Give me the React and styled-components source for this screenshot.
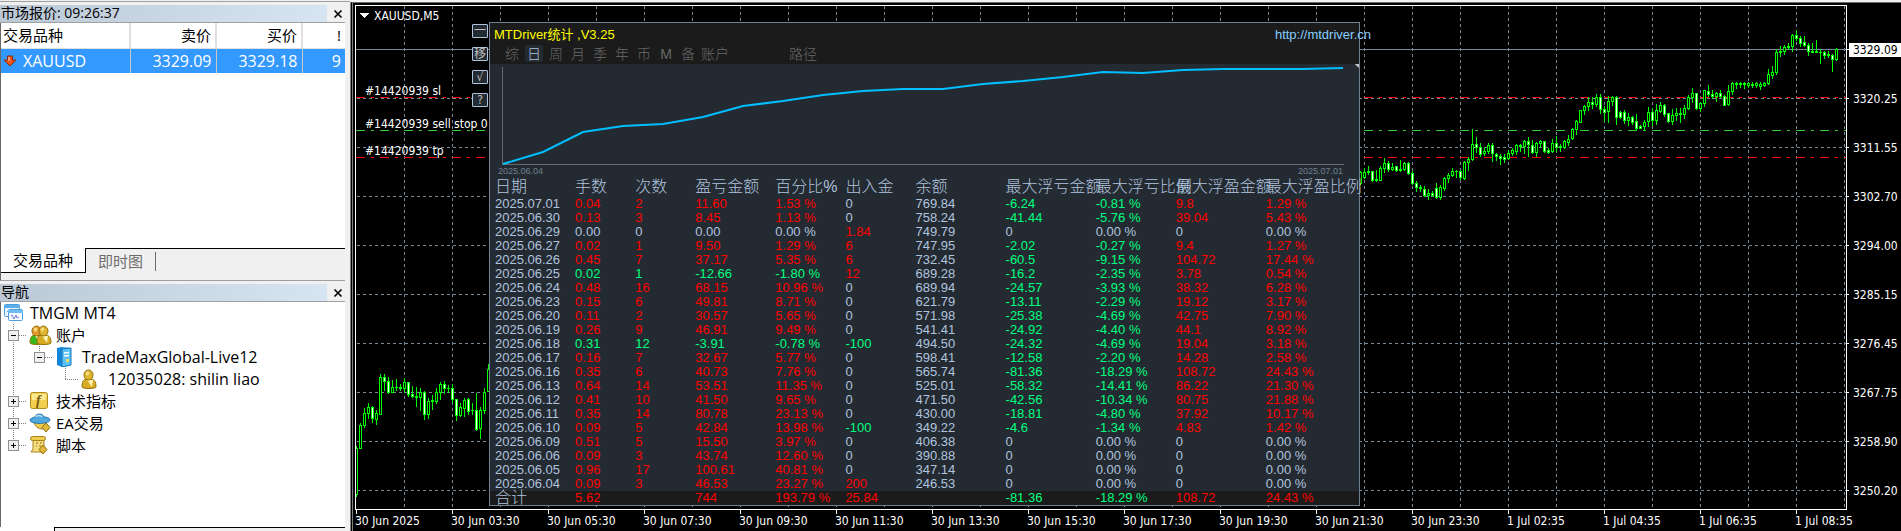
import React, { useState } from 'react'
import styled, { createGlobalStyle, css } from 'styled-components'

const GlobalStyle = createGlobalStyle`
  * {
    box-sizing: border-box;
  }
  body {
    margin: 0;
    background: #f0f0f0;
    overflow: hidden;
    font-family: 'Open Sans', 'Noto Sans CJK SC', sans-serif;
    font-size: 15px;
    color: #000;
  }
  button {
    padding: 0;
    border: 0;
    background: none;
    font: inherit;
    color: inherit;
  }
`

/* ---------- data ---------- */

const quotes = [{ symbol: 'XAUUSD', bid: '3329.09', ask: '3329.18', spread: '9' }]

const prices = ['3329.09', '3320.25', '3311.55', '3302.70', '3294.00', '3285.15', '3276.45', '3267.75', '3258.90', '3250.20']

const times = [
  '30 Jun 2025', '30 Jun 03:30', '30 Jun 05:30', '30 Jun 07:30', '30 Jun 09:30', '30 Jun 11:30',
  '30 Jun 13:30', '30 Jun 15:30', '30 Jun 17:30', '30 Jun 19:30', '30 Jun 21:30', '30 Jun 23:30',
  '1 Jul 02:35', '1 Jul 04:35', '1 Jul 06:35', '1 Jul 08:35'
]

const orders = [
  { label: '#14420939 sl', y: 91, color: '#ff0000' },
  { label: '#14420939 sell stop 0', y: 124, color: '#32cd32' },
  { label: '#14420939 tp', y: 151, color: '#ff0000' }
]

// [high, body top, body bottom, low, rising], measured downwards in thirds of a pixel
const nightCandles = [
  [1338, 1346, 1484, 1490, 1], [1270, 1276, 1345, 1345, 1], [1225, 1240, 1277, 1283, 1], [1210, 1222, 1240, 1256, 1],
  [1219, 1222, 1255, 1268, 0], [1231, 1240, 1258, 1274, 1], [1122, 1132, 1243, 1243, 1], [1122, 1132, 1144, 1172, 0],
  [1132, 1144, 1177, 1180, 0], [1141, 1162, 1177, 1177, 1], [1137, 1162, 1162, 1170, 1], [1152, 1162, 1166, 1172, 0],
  [1135, 1147, 1166, 1177, 1], [1146, 1147, 1183, 1188, 0], [1158, 1183, 1188, 1193, 0], [1162, 1190, 1192, 1220, 0],
  [1164, 1177, 1192, 1232, 1], [1174, 1177, 1243, 1258, 0], [1195, 1204, 1243, 1256, 1], [1186, 1200, 1204, 1229, 1],
  [1165, 1177, 1204, 1210, 1], [1147, 1153, 1177, 1199, 1], [1143, 1152, 1165, 1180, 0], [1155, 1165, 1166, 1177, 0],
  [1152, 1165, 1198, 1207, 0], [1198, 1198, 1246, 1260, 0], [1210, 1223, 1246, 1250, 1], [1195, 1201, 1225, 1250, 1],
  [1195, 1198, 1234, 1243, 0], [1210, 1231, 1231, 1244, 1], [1180, 1231, 1288, 1291, 0], [1222, 1231, 1285, 1315, 1],
  [1165, 1177, 1231, 1240, 1], [1092, 1108, 1174, 1174, 1]
]

const morningCandles = [
  [515, 517, 550, 553, 1], [505, 517, 532, 535, 1], [500, 513, 516, 524, 1], [513, 513, 542, 544, 0],
  [510, 537, 542, 544, 0], [500, 505, 541, 542, 1], [475, 489, 505, 517, 1], [484, 490, 508, 514, 0],
  [490, 502, 508, 510, 1], [498, 500, 512, 514, 0], [480, 508, 512, 514, 0], [486, 490, 508, 512, 1],
  [486, 490, 520, 524, 0], [515, 521, 550, 553, 0], [545, 550, 562, 573, 0], [557, 563, 566, 574, 0],
  [560, 568, 587, 590, 0], [568, 580, 586, 597, 1], [574, 580, 586, 588, 0], [549, 565, 593, 596, 0],
  [557, 562, 593, 597, 1], [533, 535, 566, 570, 1], [521, 526, 534, 548, 1], [504, 514, 526, 528, 1],
  [510, 513, 515, 532, 0], [512, 514, 532, 538, 0], [483, 487, 534, 537, 1], [472, 479, 487, 510, 1],
  [387, 433, 479, 480, 1], [411, 433, 443, 458, 0], [430, 441, 464, 470, 0], [443, 454, 461, 466, 1],
  [431, 436, 454, 460, 1], [430, 436, 460, 484, 0], [460, 463, 468, 480, 0], [463, 468, 474, 492, 0],
  [464, 472, 478, 488, 0], [452, 460, 476, 479, 1], [445, 452, 460, 466, 1], [432, 436, 454, 463, 1],
  [433, 435, 440, 455, 1], [421, 424, 440, 460, 1], [411, 424, 434, 470, 0], [421, 435, 457, 460, 0],
  [426, 430, 458, 468, 1], [420, 424, 430, 440, 1], [423, 424, 453, 456, 0], [445, 450, 456, 461, 0],
  [418, 430, 454, 456, 1], [410, 430, 442, 455, 0], [432, 438, 442, 453, 0], [421, 424, 442, 446, 1],
  [405, 418, 426, 436, 1], [385, 388, 415, 417, 1], [362, 364, 388, 404, 1], [330, 332, 367, 368, 1],
  [315, 318, 332, 344, 1], [291, 306, 320, 332, 1], [292, 306, 312, 326, 0], [283, 291, 312, 318, 1],
  [282, 292, 328, 341, 0], [318, 327, 336, 364, 0], [288, 303, 334, 366, 1], [288, 291, 303, 315, 1],
  [290, 292, 352, 372, 0], [335, 338, 352, 356, 0], [332, 336, 362, 370, 0], [341, 352, 361, 376, 1],
  [348, 352, 366, 374, 0], [342, 364, 384, 388, 0], [376, 379, 384, 386, 0], [362, 366, 380, 390, 1],
  [323, 336, 364, 380, 1], [326, 336, 362, 376, 0], [312, 332, 362, 374, 1], [308, 316, 333, 336, 1],
  [312, 316, 342, 350, 0], [340, 341, 364, 366, 0], [327, 345, 364, 372, 1], [324, 340, 346, 360, 1],
  [326, 340, 343, 366, 0], [315, 325, 344, 354, 1], [285, 291, 326, 327, 1], [264, 280, 292, 308, 1],
  [279, 281, 324, 327, 0], [306, 310, 326, 334, 1], [270, 272, 310, 318, 1], [255, 273, 282, 290, 0],
  [270, 284, 290, 294, 0], [276, 281, 289, 304, 1], [270, 280, 288, 292, 0], [285, 290, 315, 317, 0],
  [255, 273, 314, 315, 1], [246, 250, 274, 282, 1], [246, 250, 252, 265, 0], [246, 250, 252, 262, 0],
  [248, 250, 252, 265, 0], [246, 250, 257, 262, 1], [246, 252, 257, 261, 1], [246, 250, 256, 262, 1],
  [247, 252, 258, 267, 1], [246, 250, 257, 260, 1], [207, 223, 250, 252, 1], [198, 217, 225, 234, 1],
  [148, 157, 217, 224, 1], [139, 153, 158, 168, 0], [135, 142, 154, 163, 1], [129, 138, 143, 148, 1],
  [104, 106, 139, 153, 1], [90, 106, 115, 120, 0], [108, 115, 130, 140, 0], [108, 127, 136, 140, 0],
  [130, 136, 154, 165, 0], [130, 153, 156, 158, 0], [120, 154, 157, 158, 0], [148, 157, 157, 189, 0],
  [153, 157, 166, 175, 0], [154, 163, 166, 171, 0], [163, 166, 178, 215, 0], [144, 148, 178, 180, 1]
]

const columns = [
  { title: '日期', width: 80 },
  { title: '手数', width: 60 },
  { title: '次数', width: 60 },
  { title: '盈亏金额', width: 80 },
  { title: '百分比%', width: 70 },
  { title: '出入金', width: 70 },
  { title: '余额', width: 90 },
  { title: '最大浮亏金额', width: 90 },
  { title: '最大浮亏比例', width: 80 },
  { title: '最大浮盈金额', width: 90 },
  { title: '最大浮盈比例', width: 93 }
]

const days = [
  ['2025.07.01', '0.04', '2', '11.60', '1.53', '0', '769.84', '-6.24', '-0.81', '9.8', '1.29'],
  ['2025.06.30', '0.13', '3', '8.45', '1.13', '0', '758.24', '-41.44', '-5.76', '39.04', '5.43'],
  ['2025.06.29', '0.00', '0', '0.00', '0.00', '1.84', '749.79', '0', '0.00', '0', '0.00'],
  ['2025.06.27', '0.02', '1', '9.50', '1.29', '6', '747.95', '-2.02', '-0.27', '9.4', '1.27'],
  ['2025.06.26', '0.45', '7', '37.17', '5.35', '6', '732.45', '-60.5', '-9.15', '104.72', '17.44'],
  ['2025.06.25', '0.02', '1', '-12.66', '-1.80', '12', '689.28', '-16.2', '-2.35', '3.78', '0.54'],
  ['2025.06.24', '0.48', '16', '68.15', '10.96', '0', '689.94', '-24.57', '-3.93', '38.32', '6.28'],
  ['2025.06.23', '0.15', '6', '49.81', '8.71', '0', '621.79', '-13.11', '-2.29', '19.12', '3.17'],
  ['2025.06.20', '0.11', '2', '30.57', '5.65', '0', '571.98', '-25.38', '-4.69', '42.75', '7.90'],
  ['2025.06.19', '0.26', '9', '46.91', '9.49', '0', '541.41', '-24.92', '-4.40', '44.1', '8.92'],
  ['2025.06.18', '0.31', '12', '-3.91', '-0.78', '-100', '494.50', '-24.32', '-4.69', '19.04', '3.18'],
  ['2025.06.17', '0.16', '7', '32.67', '5.77', '0', '598.41', '-12.58', '-2.20', '14.28', '2.58'],
  ['2025.06.16', '0.35', '6', '40.73', '7.76', '0', '565.74', '-81.36', '-18.29', '108.72', '24.43'],
  ['2025.06.13', '0.64', '14', '53.51', '11.35', '0', '525.01', '-58.32', '-14.41', '86.22', '21.30'],
  ['2025.06.12', '0.41', '10', '41.50', '9.65', '0', '471.50', '-42.56', '-10.34', '80.75', '21.88'],
  ['2025.06.11', '0.35', '14', '80.78', '23.13', '0', '430.00', '-18.81', '-4.80', '37.92', '10.17'],
  ['2025.06.10', '0.09', '5', '42.84', '13.98', '-100', '349.22', '-4.6', '-1.34', '4.83', '1.42'],
  ['2025.06.09', '0.51', '5', '15.50', '3.97', '0', '406.38', '0', '0.00', '0', '0.00'],
  ['2025.06.06', '0.09', '3', '43.74', '12.60', '0', '390.88', '0', '0.00', '0', '0.00'],
  ['2025.06.05', '0.96', '17', '100.61', '40.81', '0', '347.14', '0', '0.00', '0', '0.00'],
  ['2025.06.04', '0.09', '3', '46.53', '23.27', '200', '246.53', '0', '0.00', '0', '0.00']
]

const total = ['合计', '5.62', '', '744', '193.79', '25.84', '', '-81.36', '-18.29', '108.72', '24.43']

const periods = ['综', '日', '周', '月', '季', '年', '币', 'M', '备']

/* ---------- side panels ---------- */

const Desk = styled.div`
  display: flex;
  min-height: 100vh;
  border-top: 1px solid #f0f0f0;
`

const Side = styled.aside`
  flex: 0 0 350px;
  padding-right: 5px;
  border-top: 1px solid #a0a0a0;
  display: flex;
  flex-direction: column;
`

const Panel = styled.section`
  display: flex;
  flex-direction: column;
  padding-top: 3px;
  flex: ${props => (props.$grow ? '1' : 'none')};
  border-top: ${props => (props.$grow ? '1px solid #a0a0a0' : '0')};
`

const TitleBar = styled.header`
  display: flex;
  height: 18px;
  border-bottom: 1px solid #a0a0a0;
`

const Title = styled.h2`
  flex: 1;
  margin: 0;
  padding-left: 1px;
  font-size: 14px;
  line-height: 16px;
  font-weight: 400;
  background: linear-gradient(90deg, #bbc8d6, #d7e4f2);
`

const Close = styled.button`
  width: 14px;
  margin-left: 4px;
  display: grid;
  place-items: center;
`

const PanelBody = styled.div`
  flex: 1;
  background: #fff;
  border-left: 1px solid #696969;
`

const QuoteBody = styled(PanelBody)`
  min-height: 225px;
`

const QuoteTable = styled.table`
  width: 100%;
  table-layout: fixed;
  border-collapse: collapse;
  line-height: 24px;

  th,
  td {
    height: 25px;
    padding: 0 4px;
    font-weight: 400;
    text-align: right;
  }
  th {
    border-right: 2px solid #e0e0e0;
    border-bottom: 1px solid #e0e0e0;
  }
  td {
    color: #fff;
    background: #3399ff;
    border-right: 1px solid #c8c8c8;
    font-size: 16px;
  }
  th:first-child,
  td:first-child {
    text-align: left;
    padding: 0 2px;
  }
  th:last-child,
  td:last-child {
    border-right: 0;
  }
`

const Symbol = styled.span`
  display: flex;
  align-items: center;
  gap: 6px;
`

const Tabs = styled.div`
  display: flex;
  height: 32px;
  padding-bottom: 7px;
  border-left: 1px solid #696969;
`

const Tab = styled.button`
  height: 25px;
  padding: 0 12px;
  line-height: 22px;
  ${props => props.$active
    ? css`
        background: #fff;
        border-right: 1px solid #000;
        border-bottom: 1px solid #000;
      `
    : css`
        color: #6d6d6d;
        border-top: 1px solid #000;
      `}
`

const TabRest = styled.div`
  flex: 1;
  border-top: 1px solid #000;

  &::before {
    content: '';
    display: block;
    width: 1px;
    height: 19px;
    margin-top: 3px;
    background: #6d6d6d;
  }
`

const BottomTabs = styled.div`
  display: flex;
  height: 4px;

  &::before {
    content: '';
    width: 54px;
    background: #fff;
    border-right: 1px solid #000;
  }
  &::after {
    content: '';
    flex: 1;
    border-top: 1px solid #000;
  }
`

const TreeList = styled.ul`
  margin: 0;
  padding: 0;
  list-style: none;
`

const TreeRow = styled.li`
  display: flex;
  height: 22px;
  line-height: 22px;
  white-space: nowrap;
  font-size: ${props => (props.$latin ? '16px' : '15px')};
`

const dotsDown = 'repeating-linear-gradient(#808080 0 1px, transparent 1px 2px)'
const dotsRight = 'repeating-linear-gradient(90deg, #808080 0 1px, transparent 1px 2px)'

const rails = {
  none: 'none',
  full: `${dotsDown} 12px 0 / 1px 22px no-repeat`,
  branch: `${dotsDown} 12px 0 / 1px 22px no-repeat, ${dotsRight} 12px 11px / 14px 1px no-repeat`,
  last: `${dotsDown} 12px 0 / 1px 11px no-repeat, ${dotsRight} 12px 11px / 14px 1px no-repeat`
}

const Rail = styled.span`
  width: 26px;
  padding-right: 1px;
  display: grid;
  place-items: center;
  background: ${props => rails[props.$line]};
`

const Expander = styled.button`
  width: 11px;
  height: 11px;
  display: grid;
  place-items: center;
  border: 1px solid #919191;
  background: #f0f0f0;
`

const TreeIcon = styled.span`
  width: 29px;
  display: grid;
  place-items: center start;
  padding-left: 2px;
`

/* ---------- chart ---------- */

const ChartWindow = styled.main`
  flex: 1;
  min-width: 0;
  display: grid;
  grid-template-columns: minmax(0, 1fr) 54px;
  grid-template-rows: 505px 1fr;
  margin-top: 1px;
  padding: 2px 0 0 2px;
  border-top: 1px solid #696969;
  border-left: 3px double #808080;
  background: #000;
  color: #fff;
  font-family: 'DejaVu Sans Condensed', 'Noto Sans CJK SC', sans-serif;
  font-size: 12px;
`

const Plot = styled.div`
  position: relative;
  border: 1px solid #fff;
`

const PlotSvg = styled.svg`
  display: block;
  width: 100%;
  height: 503px;
`

const PriceAxis = styled.ol`
  margin: 0;
  padding: 20px 0 0;
  list-style: none;
`

const Price = styled.li`
  display: flex;
  align-items: center;
  height: 49px;

  &::before {
    content: '';
    width: 2px;
    height: 1px;
    background: #fff;
  }
  span {
    flex: 1;
    padding-left: 4px;
    line-height: 14px;
    color: ${props => (props.$current ? '#000' : '#fff')};
    background: ${props => (props.$current ? '#fff' : 'none')};
  }
`

const TimeAxis = styled.ol`
  grid-column: 1 / -1;
  display: flex;
  margin: 0;
  padding: 0;
  list-style: none;
  overflow: hidden;
`

const Time = styled.li`
  flex: 0 0 96px;
  line-height: 14px;
  white-space: nowrap;

  &::before {
    content: '';
    display: block;
    width: 1px;
    height: 4px;
    margin-left: 1px;
    background: #fff;
  }
`

/* ---------- statistics window ---------- */

const StatsWindow = styled.section`
  position: absolute;
  left: 133px;
  top: 16px;
  background: #242a32;
  border: 1px solid #708090;
  color: #b0c4de;
  font-family: 'Liberation Sans', 'Noto Sans CJK SC', sans-serif;
  font-size: 13px;
`

const StatsHead = styled.header`
  display: flex;
  flex-direction: column;
  gap: 2px;
  height: 41px;
  padding: 4px 0 0 4px;
  background: #1b1b1b;
`

const HeadLine = styled.div`
  display: flex;
  justify-content: space-between;
  line-height: 16px;

  h1 {
    margin: 0;
    font-size: 13px;
    font-weight: 400;
    color: #ffff00;
  }
  a {
    margin-right: -12px;
    color: #87cefa;
    text-decoration: none;
  }
`

const PeriodBar = styled.nav`
  display: flex;
  align-items: center;
  padding-left: 7px;
`

const Period = styled.button`
  width: ${props => (props.$wide ? '44px' : '18px')};
  height: 17px;
  margin: 0 2px;
  line-height: 16px;
  font-size: 14px;
  font-weight: 300;
  text-align: ${props => (props.$wide ? 'left' : 'center')};
  border-radius: 2px;
  color: ${props => (props.$active ? '#b0c4de' : '#696969')};
  background: ${props => (props.$active ? '#242a32' : 'none')};
`

const PathButton = styled(Period)`
  margin-left: 42px;
`

const CurveSvg = styled.svg`
  display: block;
  height: 102px;
  width: 100%;
`

const CurveDates = styled.div`
  display: flex;
  justify-content: space-between;
  padding: 0 16px 0 8px;
  font-size: 9px;
  line-height: 11px;
  color: #708090;
`

const StatsTable = styled.table`
  table-layout: fixed;
  width: 869px;
  border-collapse: collapse;
  line-height: 14px;

  th {
    height: 20px;
    padding: 0;
    font-size: 16px;
    font-weight: 300;
    text-align: left;
    white-space: nowrap;
    line-height: 20px;
  }
  td {
    height: 14px;
    padding: 0;
    white-space: nowrap;
  }
  th:first-child,
  td:first-child {
    padding-left: 5px;
  }
  tfoot {
    background: #1b1b1b;
  }
  tfoot th {
    height: 14px;
    line-height: 14px;
  }
`

const tones = { up: '#ff0000', down: '#00ff7f', flat: '#b0c4de' }

const Amount = styled.td`
  color: ${props => tones[props.$tone]};
`

const ToolStack = styled.div`
  position: absolute;
  left: 116px;
  top: 18px;
  display: flex;
  flex-direction: column;
  gap: 9px;
`

const Tool = styled.button`
  width: 16px;
  height: 14px;
  display: grid;
  place-items: center;
  border: 1px solid #b0c4de;
  border-radius: 1px;
  background: #242a32;
  color: #c0c0c0;
  font-size: 12px;
  line-height: 12px;
`

/* ---------- icons ---------- */

const CloseIcon = () => (
  <svg width='10' height='10' viewBox='0 0 10 10'>
    <path d='M1.5 1.5l7 7M8.5 1.5l-7 7' stroke='#000' strokeWidth='1.6' />
  </svg>
)

const DownIcon = () => (
  <svg width='14' height='14' viewBox='0 0 14 14'>
    <path d='M4.5 2h5v4h3.5L7 12 1 6h3.5z' fill='#e8521c' stroke='#8c2a0c' strokeLinejoin='round' />
    <path d='M6 3v4' stroke='#ffb48c' strokeWidth='1.5' />
  </svg>
)

const TerminalIcon = () => (
  <svg width='22' height='20' viewBox='0 0 22 20'>
    <rect x='1.5' y='1.5' width='15' height='12' rx='1' fill='#eaf5ff' stroke='#4d9fe0' />
    <path d='M1 2h16v3H1z' fill='#5aaeea' />
    <path d='M4 9l2-2 1 3 2-2' fill='none' stroke='#6a8fe0' />
    <rect x='5.5' y='6.5' width='14' height='11' rx='1' fill='#f4faff' stroke='#4d9fe0' />
    <path d='M5 7h15v3H5z' fill='#6cbcf2' />
    <path d='M8 13l1-1 2 4 2-4 1 3 2-1' fill='none' stroke='#6a7fe0' />
  </svg>
)

const Person = ({ x = 0, body = '#d8ab22', head = '#dfb52e' }) => (
  <g transform={`translate(${x} 0)`}>
    <path d='M1 18c0-5 1-7 4-8h5c4 1 5 3 5 8-1 2-13 2-14 0z' fill={body} stroke='#94700c' />
    <path d='M6 11l5 7 1-7z' fill='#fff2b0' />
    <ellipse cx='7.5' cy='6' rx='4.5' ry='5' fill={head} stroke='#94700c' />
    <ellipse cx='6.5' cy='4.5' rx='1.8' ry='2' fill='#f4dc84' />
  </g>
)

const AccountsIcon = () => (
  <svg width='23' height='20' viewBox='0 0 23 20'>
    <Person body='#34b81c' head='#e8982a' />
    <Person x={7} />
  </svg>
)

const UserIcon = () => (
  <svg width='17' height='20' viewBox='0 0 17 20'>
    <Person />
  </svg>
)

const ServerIcon = () => (
  <svg width='20' height='20' viewBox='0 0 20 20'>
    <path d='M2 1l4-1 10 1v17l-9 2-5-2z' fill='#1587d8' />
    <path d='M7 2l9-1v17l-9 2z' fill='#5cc2f8' stroke='#1878c0' />
    <path d='M9 6l5-.5M9 9l5-.5' stroke='#fff' strokeWidth='1.5' />
    <rect x='11' y='12' width='3' height='3' fill='#f6d860' />
  </svg>
)

const IndicatorIcon = () => (
  <svg width='20' height='20' viewBox='0 0 20 20'>
    <rect x='1.5' y='1.5' width='17' height='16' rx='2' fill='#f2cf50' stroke='#b08a1c' />
    <rect x='3' y='3' width='14' height='6' rx='1' fill='#fbe890' />
    <text x='7' y='14' fontFamily='Liberation Serif, serif' fontSize='14' fontStyle='italic' fontWeight='700' fill='#7a5a08'>f</text>
  </svg>
)

const ExpertIcon = () => (
  <svg width='22' height='20' viewBox='0 0 22 20'>
    <path d='M5 8c0 5 4 8 9 8l3-7z' fill='#eecb4c' stroke='#a5811a' />
    <path d='M1 7c0-2 3-2 5-3 1-4 8-4 9 0 3 0 6 1 6 3 0 4-20 5-20 0z' fill='#52a8dc' stroke='#2c78ac' />
    <path d='M7 4c1-2 5-2 6 0' fill='none' stroke='#b8e0f6' strokeWidth='1.5' />
    <path d='M17 10l4 4.5-4 4.5-4-4.5z' fill='#e2b83a' stroke='#94700c' />
  </svg>
)

const ScriptIcon = () => (
  <svg width='20' height='20' viewBox='0 0 20 20'>
    <path d='M4 4v10l-2 3h12l1-3V4z' fill='#f6dd80' stroke='#a5811a' />
    <rect x='1.5' y='1.5' width='15' height='4' rx='2' fill='#eecb4c' stroke='#a5811a' />
    <path d='M7 8h2M11 8h2M7 11h1M10 11h2' stroke='#94700c' />
    <path d='M14 10l4 4.5-4 4.5-4-4.5z' fill='#e2b83a' stroke='#94700c' />
  </svg>
)

const Sign = ({ open }) => (
  <svg width='7' height='7' viewBox='0 0 7 7' shapeRendering='crispEdges'>
    <path d={open ? 'M1 3.5h5' : 'M1 3.5h5M3.5 1v5'} stroke='#000' />
  </svg>
)

const tree = [
  { label: 'TMGM MT4', Icon: TerminalIcon, rails: [], latin: true },
  { label: '账户', Icon: AccountsIcon, rails: ['branch'], open: true },
  { label: 'TradeMaxGlobal-Live12', Icon: ServerIcon, rails: ['full', 'last'], open: true, latin: true },
  { label: '12035028: shilin liao', Icon: UserIcon, rails: ['full', 'none', 'last'], latin: true },
  { label: '技术指标', Icon: IndicatorIcon, rails: ['branch'], open: false },
  { label: 'EA交易', Icon: ExpertIcon, rails: ['branch'], open: false },
  { label: '脚本', Icon: ScriptIcon, rails: ['last'], open: false }
]

/* ---------- components ---------- */

const PanelTitle = ({ children }) => (
  <TitleBar>
    <Title>{children}</Title>
    <Close aria-label='关闭'><CloseIcon /></Close>
  </TitleBar>
)

const MarketWatch = () => (
  <Panel>
    <PanelTitle>市场报价: 09:26:37</PanelTitle>
    <QuoteBody>
      <QuoteTable>
        <colgroup>
          <col style={{ width: 129 }} />
          <col style={{ width: 86 }} />
          <col style={{ width: 86 }} />
          <col />
        </colgroup>
        <thead>
          <tr><th>交易品种</th><th>卖价</th><th>买价</th><th>!</th></tr>
        </thead>
        <tbody>
          {quotes.map(quote => (
            <tr key={quote.symbol}>
              <td><Symbol><DownIcon />{quote.symbol}</Symbol></td>
              <td>{quote.bid}</td>
              <td>{quote.ask}</td>
              <td>{quote.spread}</td>
            </tr>
          ))}
        </tbody>
      </QuoteTable>
    </QuoteBody>
    <Tabs>
      <Tab $active>交易品种</Tab>
      <Tab>即时图</Tab>
      <TabRest />
    </Tabs>
  </Panel>
)

const Navigator = () => (
  <Panel $grow>
    <PanelTitle>导航</PanelTitle>
    <PanelBody>
      <TreeList>
        {tree.map(({ label, Icon, rails: lines, open, latin }) => (
          <TreeRow key={label} $latin={latin}>
            {lines.map((line, i) => (
              <Rail key={i} $line={line}>
                {open !== undefined && i === lines.length - 1 &&
                  <Expander aria-label={label}><Sign open={open} /></Expander>}
              </Rail>
            ))}
            <TreeIcon><Icon /></TreeIcon>
            {label}
          </TreeRow>
        ))}
      </TreeList>
    </PanelBody>
    <BottomTabs />
  </Panel>
)

const Candles = ({ data, start }) => data.map((candle, i) => {
  const [high, top, bottom, low] = candle.slice(0, 4).map(v => Math.floor(v / 3) - 6)
  const x = start + i * 4
  const height = bottom - top + 1
  return (
    <g key={x} fill='#00ff00'>
      <rect x={x} y={high} width='1' height={low - high + 1} />
      <rect x={x - 1} y={top} width='3' height={height} />
      {height > 2 &&
        <rect x={x} y={top + 1} width='1' height={height - 2} fill={candle[4] ? '#000' : '#fff'} />}
    </g>
  )
})

const ChartPlot = () => (
  <PlotSvg shapeRendering='crispEdges'>
    <g stroke='#778899' strokeDasharray='3 3'>
      {Array.from({ length: 40 }, (_, i) => (
        <line key={i} x1={i * 48 + 48.5} x2={i * 48 + 48.5} y1='0' y2='100%' />
      ))}
      {Array.from({ length: 9 }, (_, i) => (
        <line key={i} x1='1' x2='100%' y1={i * 49 + 92.5} y2={i * 49 + 92.5} />
      ))}
    </g>
    <line x1='0' x2='100%' y1='43.5' y2='43.5' stroke='#778899' />
    {orders.map(order => (
      <line key={order.label} x1='0' x2='100%' y1={order.y + 0.5} y2={order.y + 0.5} stroke={order.color} strokeDasharray='9 6 3 6' />
    ))}
    <Candles data={nightCandles} start={0} />
    <Candles data={morningCandles} start={1004} />
    <path d='M3 7h10l-5 5z' fill='#fff' />
    <g fill='#fff'>
      <text x='18' y='14'>XAUUSD,M5</text>
      {orders.map(order => <text key={order.label} x='9' y={order.y - 2}>{order.label}</text>)}
    </g>
  </PlotSvg>
)

// growth in percent, oldest day first, scaled so that the sum fills the 96px of the curve
const curvePoints = () => {
  let sum = 0
  const points = [[13, 100]]
  days.slice().reverse().forEach((day, i) => {
    sum += Number(day[4])
    points.push([13 + (i + 1) * 40, 100 - Math.round(sum * 96 / 193.79)])
  })
  return points.join(' ')
}

const GrowthCurve = () => (
  <CurveSvg>
    <path d='M12.5 3v97.5H854' fill='none' stroke='#696969' />
    <polyline points={curvePoints()} fill='none' stroke='#00bfff' strokeWidth='2' />
    <path d='M869 -3v7l-4-3.5z' fill='#c0c0c0' />
  </CurveSvg>
)

const tone = (row, col) => {
  if (col === 0 || col === 6) return 'flat'
  const value = Number(row[col === 1 || col === 2 ? 3 : col])
  if (value === 0) return 'flat'
  return value > 0 ? 'up' : 'down'
}

const cellText = (value, col) => ([4, 8, 10].includes(col) ? `${value} %` : value)

const Statistics = () => {
  const [period, setPeriod] = useState('日')
  return (
    <StatsWindow>
      <StatsHead>
        <HeadLine>
          <h1>MTDriver统计 ,V3.25</h1>
          <a href='http://mtdriver.cn'>http://mtdriver.cn</a>
        </HeadLine>
        <PeriodBar>
          {periods.map(name => (
            <Period key={name} $active={name === period} onClick={() => setPeriod(name)}>{name}</Period>
          ))}
          <Period $wide>账户</Period>
          <PathButton $wide>路径</PathButton>
        </PeriodBar>
      </StatsHead>
      <GrowthCurve />
      <CurveDates><span>2025.06.04</span><span>2025.07.01</span></CurveDates>
      <StatsTable>
        <colgroup>
          {columns.map((column, i) => <col key={column.title} style={{ width: i ? column.width : column.width + 5 }} />)}
        </colgroup>
        <thead>
          <tr>{columns.map(column => <th key={column.title}>{column.title}</th>)}</tr>
        </thead>
        <tbody>
          {days.map(row => (
            <tr key={row[0]}>
              {row.map((value, col) => <Amount key={col} $tone={tone(row, col)}>{cellText(value, col)}</Amount>)}
            </tr>
          ))}
        </tbody>
        <tfoot>
          <tr>
            <th>{total[0]}</th>
            {total.slice(1).map((value, i) => (
              <Amount key={i} $tone={tone(total, i + 1)}>{cellText(value, i + 1)}</Amount>
            ))}
          </tr>
        </tfoot>
      </StatsTable>
    </StatsWindow>
  )
}

const App = () => (
  <>
    <GlobalStyle />
    <Desk>
      <Side>
        <MarketWatch />
        <Navigator />
      </Side>
      <ChartWindow>
        <Plot>
          <ChartPlot />
          <ToolStack>
            <Tool>一</Tool>
            <Tool>移</Tool>
            <Tool>√</Tool>
            <Tool>?</Tool>
          </ToolStack>
          <Statistics />
        </Plot>
        <PriceAxis>
          {prices.map((price, i) => <Price key={price} $current={i === 0}><span>{price}</span></Price>)}
        </PriceAxis>
        <TimeAxis>
          {times.map(time => <Time key={time}>{time}</Time>)}
        </TimeAxis>
      </ChartWindow>
    </Desk>
  </>
)

export default App
